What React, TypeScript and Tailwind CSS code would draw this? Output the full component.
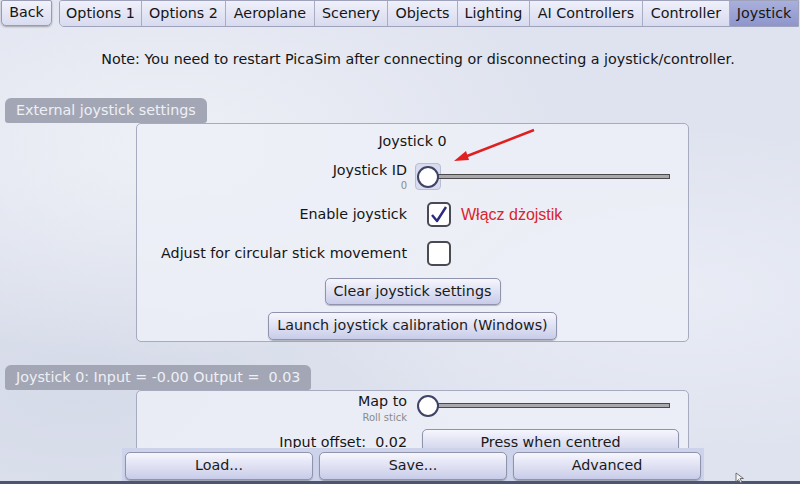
import React from "react";

const tabs = [
  { name: "Options 1", w: "w-[81px]" },
  { name: "Options 2", w: "w-[84px]" },
  { name: "Aeroplane", w: "w-[89px]" },
  { name: "Scenery", w: "w-[73px]" },
  { name: "Objects", w: "w-[70px]" },
  { name: "Lighting", w: "w-[72px]" },
  { name: "AI Controllers", w: "w-[113px]" },
  { name: "Controller", w: "w-[87px]" },
  { name: "Joystick", w: "w-[69px]", active: true },
];

const btn =
  "rounded-[5px] border border-[#8f93ab] bg-gradient-to-b from-[#f6f6fd] to-[#c9cce9] text-[14.3px] text-[#1a1a1a] shadow-[0_1px_1px_rgba(0,0,0,0.25)]";

const Slider = ({ highlight }: { highlight?: boolean }) => (
  <div className="relative flex h-[27px] w-[258px] items-center">
    {highlight && (
      <div className="absolute left-0 top-0 h-[27px] w-[26px] rounded-[4px] border border-[#b9bdd6] bg-[#d9dcef]" />
    )}
    <div className="absolute left-[23px] right-[3px] top-[11px] h-[5px] border border-[#4a4a4a] bg-[#a9a9ad]" />
    <div className="relative ml-[2px] h-[22px] w-[22px] rounded-full border-2 border-[#3f4466] bg-white" />
  </div>
);

const Checkbox = ({ checked }: { checked?: boolean }) => (
  <div className="flex h-[25px] w-[24px] items-center justify-center rounded-[5px] border-2 border-[#4a4a55] bg-white">
    {checked && (
      <svg width="20" height="20" viewBox="0 0 20 20">
        <path d="M3 10 L8 16 L17 2" fill="none" stroke="#2a2a80" strokeWidth="2.4" strokeLinejoin="round" />
      </svg>
    )}
  </div>
);

const Header = ({ children }: { children: React.ReactNode }) => (
  <div className="ml-[5px] flex h-[25px] w-fit items-center rounded-t-[6px] rounded-b-[3px] bg-[#a3a6b5] px-[11px] text-[14.3px] text-[#eef0f6]">
    {children}
  </div>
);

export default function App() {
  return (
    <div className="relative h-[484px] w-[800px] overflow-hidden bg-[#dfe3ef] bg-[radial-gradient(ellipse_at_20%_30%,#eef0f6_0%,transparent_45%),radial-gradient(ellipse_at_85%_60%,#e9ecf5_0%,transparent_40%),radial-gradient(ellipse_at_10%_80%,#d6dbe9_0%,transparent_40%)] font-['DejaVu_Sans',sans-serif] text-[#151515]">
      {/* tab bar */}
      <div className="flex items-start pl-[1px]">
        <button className="h-[26px] w-[51px] rounded-b-[5px] rounded-t-[2px] border border-[#979bb3] bg-gradient-to-b from-[#f1f2fb] to-[#d9dcef] text-[14.3px] shadow-[0_1px_2px_rgba(0,0,0,0.3)]">
          Back
        </button>
        <div className="ml-[7px] flex h-[27px] overflow-hidden rounded-bl-[5px] rounded-tl-[3px] border border-[#9ea2ba]">
          {tabs.map((t, i) => (
            <div
              key={t.name}
              className={`${t.w} flex items-center justify-center text-[14.3px] ${i > 0 ? "border-l border-[#a9adc4]" : ""} ${
                t.active
                  ? "bg-gradient-to-b from-[#aab0dc] to-[#8e95cb]"
                  : "bg-gradient-to-b from-[#eff0fa] to-[#d8dbef]"
              }`}
            >
              {t.name}
            </div>
          ))}
        </div>
      </div>

      <p className="mt-[22px] pl-[36px] text-center text-[14.3px] leading-[20px]">
        Note: You need to restart PicaSim after connecting or disconnecting a joystick/controller.
      </p>

      <div className="mt-[29px]">
        <Header>External joystick settings</Header>
      </div>

      {/* panel 1 */}
      <div className="ml-[136px] h-[219px] w-[553px] rounded-[5px] border border-[#a7abbf] bg-[#eef0f8]/80 pt-[7px]">
        <div className="text-center text-[14.3px] leading-[20px]">Joystick 0</div>
        <div className="mt-[8px] grid grid-cols-[271px_1fr] gap-x-[7px]">
          <div className="flex flex-col items-end pr-[1px] pt-[2px]">
            <span className="text-[14.3px] leading-[18px]">Joystick ID</span>
            <span className="text-[10px] leading-[14px] text-[#8a8a8a]">0</span>
          </div>
          <div className="pt-[4px]">
            <Slider highlight />
          </div>
        </div>
        <div className="mt-[9px] grid grid-cols-[271px_1fr] items-center gap-x-[19px]">
          <span className="pr-[1px] text-right text-[14.3px]">Enable joystick</span>
          <div className="flex items-center gap-[10px]">
            <Checkbox checked />
            <span className="font-['Liberation_Sans',sans-serif] text-[16px] text-[#d9242c]">Włącz dżojstik</span>
          </div>
        </div>
        <div className="mt-[14px] grid grid-cols-[271px_1fr] items-center gap-x-[19px]">
          <span className="pr-[1px] text-right text-[14.3px]">Adjust for circular stick movement</span>
          <Checkbox />
        </div>
        <div className="mt-[12px] flex flex-col items-center gap-[7px]">
          <button className={`${btn} h-[27px] w-[176px]`}>Clear joystick settings</button>
          <button className={`${btn} h-[28px] w-[289px]`}>Launch joystick calibration (Windows)</button>
        </div>
      </div>

      <div className="mt-[23px]">
        <Header>Joystick 0: Input = -0.00 Output = &nbsp;0.03</Header>
      </div>

      {/* panel 2 */}
      <div className="ml-[136px] h-[120px] w-[553px] rounded-[5px] border border-[#a7abbf] bg-[#eef0f8]/80 pt-[1px]">
        <div className="grid grid-cols-[271px_1fr] gap-x-[7px]">
          <div className="flex flex-col items-end pr-[1px]">
            <span className="text-[14.3px] leading-[18px]">Map to</span>
            <span className="text-[10px] leading-[16px] text-[#8a8a8a]">Roll stick</span>
          </div>
          <Slider />
        </div>
        <div className="mt-[3px] grid grid-cols-[271px_1fr] items-center gap-x-[14px]">
          <span className="pr-[1px] text-right text-[14.3px]">Input offset: &nbsp;0.02</span>
          <button className={`${btn} h-[27px] w-[257px]`}>Press when centred</button>
        </div>
      </div>

      {/* bottom bar overlay */}
      <div className="absolute bottom-[3px] left-[122px] flex h-[33px] w-[582px] items-start gap-[6px] bg-[#cdd3ea] px-[3px] pt-[4px]">
        <button className={`${btn} h-[28px] flex-1`}>Load...</button>
        <button className={`${btn} h-[28px] flex-1`}>Save...</button>
        <button className={`${btn} h-[28px] flex-1`}>Advanced</button>
      </div>
      <div className="absolute bottom-0 left-0 h-[3px] w-full bg-[#4b5670]" />

      {/* red annotation arrow */}
      <svg className="absolute left-[450px] top-[126px]" width="90" height="40" viewBox="0 0 90 40">
        <line x1="84" y1="4" x2="12" y2="32" stroke="#e02020" strokeWidth="2.5" />
        <path d="M4 35 L16 25 L19 34 Z" fill="#e02020" />
      </svg>

      {/* mouse cursor */}
      <svg className="absolute left-[735px] top-[472px]" width="10" height="12" viewBox="0 0 10 12">
        <path d="M1 1 L1 10 L3.5 7.5 L5.5 11 L7 10 L5 6.5 L8.5 6.5 Z" fill="#f4f4f8" stroke="#555" strokeWidth="0.8" />
      </svg>
    </div>
  );
}
